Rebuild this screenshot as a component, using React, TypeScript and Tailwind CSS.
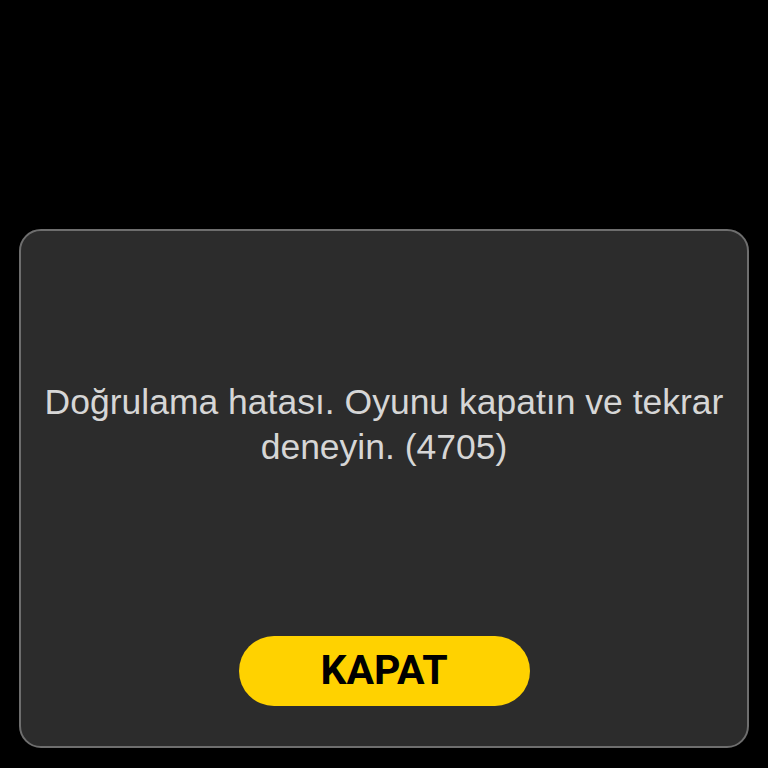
import React from 'react';

export default function App() {
    return (
        <div className="w-[768px] h-[768px] bg-black pt-[229px] px-[19px]">
            <div className="h-[519px] rounded-[22px] border-2 border-[#6e6e6e] bg-[#2c2c2c] flex flex-col items-center">
                <div className="flex-1 flex items-center justify-center px-4 pb-[17px]">
                    <p
                        className="text-[35.5px] leading-[45px] text-[#d6d6d6] text-center"
                        style={{ fontFamily: '"Liberation Sans", Arial, sans-serif' }}
                    >
                        Doğrulama hatası. Oyunu kapatın ve tekrar deneyin. (4705)
                    </p>
                </div>
                <button
                    type="button"
                    className="mb-[40px] w-[291px] h-[70px] rounded-full bg-[#ffd200] text-black text-[41px] font-bold flex items-center justify-center"
                    style={{ fontFamily: 'Roboto, "Liberation Sans", sans-serif' }}
                >
                    KAPAT
                </button>
            </div>
        </div>
    );
}
